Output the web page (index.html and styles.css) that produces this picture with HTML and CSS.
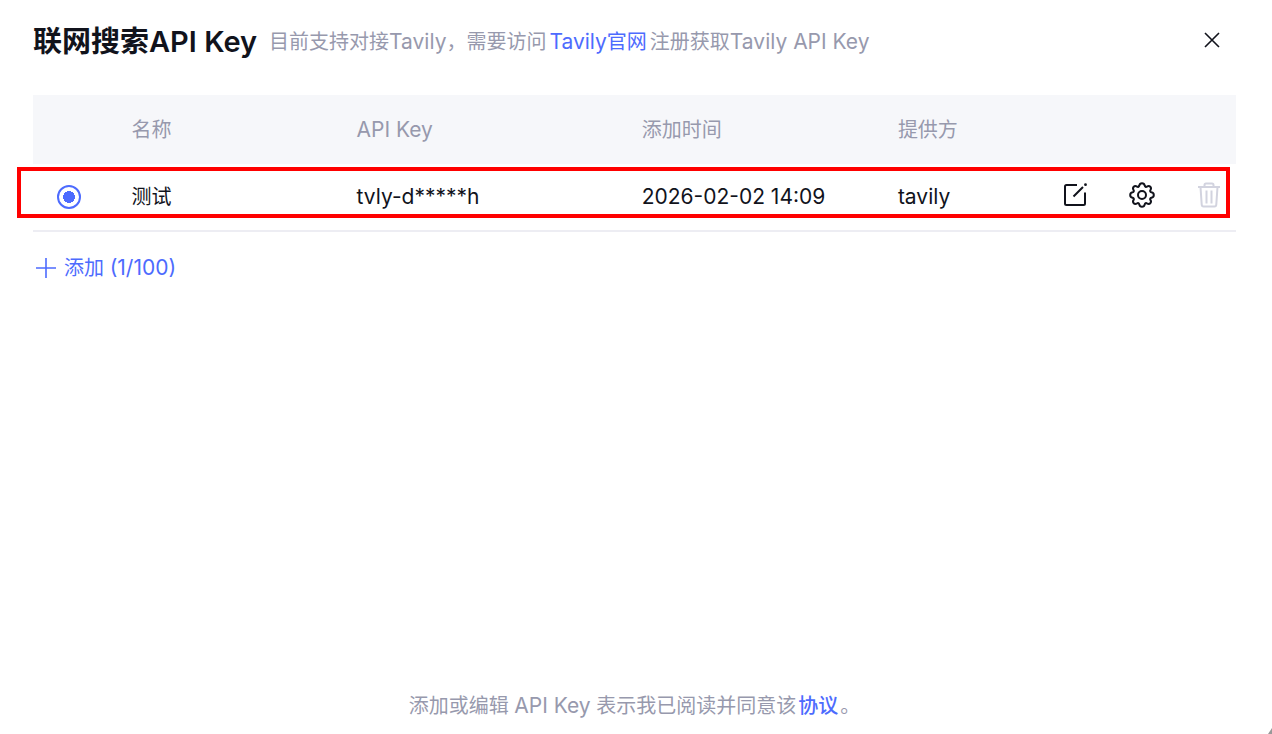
FILE: index.html
```html
<!DOCTYPE html>
<html lang="zh-CN">
<head>
    <meta charset="UTF-8">
    <meta name="viewport" content="width=device-width, initial-scale=1.0">
    <title>联网搜索API Key</title>
    <link rel="stylesheet" href="styles.css">
</head>
<body>
    <div class="dialog">
        <header class="dialog-header">
            <h1>联网搜索API Key</h1>
            <p class="hint">目前支持对接<span class="latin">Tavily</span>，需要访问<a class="hint-link" href="#"><span class="latin">Tavily</span>官网</a>注册获取<span class="latin">Tavily API Key</span></p>
            <button class="icon-button close" type="button" aria-label="关闭">
                <svg width="16" height="16" viewBox="0 0 16 16"><path d="M1 1l14 14M15 1L1 15"/></svg>
            </button>
        </header>
        <main>
            <div class="table-wrap">
                <table>
                    <thead>
                        <tr>
                            <th class="col-radio"></th>
                            <th class="col-name">名称</th>
                            <th class="col-key latin">API Key</th>
                            <th class="col-time">添加时间</th>
                            <th class="col-provider">提供方</th>
                            <th class="col-actions"></th>
                        </tr>
                    </thead>
                    <tbody>
                        <tr>
                            <td><input type="radio" name="key" id="key1" aria-label="测试" checked></td>
                            <td><label for="key1">测试</label></td>
                            <td class="latin">tvly-d*****h</td>
                            <td class="latin">2026-02-02 14:09</td>
                            <td class="latin">tavily</td>
                            <td class="col-actions">
                                <div class="actions">
                                    <button class="icon-button" type="button" aria-label="编辑">
                                        <svg width="28" height="28" viewBox="0 0 28 28"><path d="M16 4H5.500Q4 4 4 5.500V22.500Q4 24 5.500 24H22.500Q24 24 24 22.500V11.500M12.500 15.500L22 6"/><circle class="dot" cx="24.500" cy="3.700" r="1.400"/></svg>
                                    </button>
                                    <button class="icon-button" type="button" aria-label="设置">
                                        <svg width="28" height="28" viewBox="0 0 28 28"><circle cx="14" cy="14" r="4"/><path d="M11.300 4.600C11.900 1.400 16.100 1.400 16.700 4.600C17 5.800 18 6.200 18.900 5.600C21.600 3.900 24.100 6.400 22.400 9.100C21.800 10 22.200 11 23.400 11.300C26.600 11.900 26.600 16.100 23.400 16.700C22.200 17 21.800 18 22.400 18.900C24.100 21.600 21.600 24.100 18.900 22.400C18 21.800 17 22.200 16.700 23.400C16.100 26.600 11.900 26.600 11.300 23.400C11 22.200 10 21.800 9.100 22.400C6.400 24.100 3.900 21.600 5.600 18.900C6.200 18 5.800 17 4.600 16.700C1.400 16.100 1.400 11.900 4.600 11.300C5.800 11 6.200 10 5.600 9.100C3.900 6.400 6.400 3.900 9.100 5.600C10 6.200 11 5.800 11.300 4.600Z"/></svg>
                                    </button>
                                    <button class="icon-button" type="button" aria-label="删除" disabled>
                                        <svg width="28" height="28" viewBox="0 0 28 28"><path d="M3 6H25M9.500 6V4Q9.500 2.500 11 2.500H17Q18.500 2.500 18.500 4V6M5.500 6L6.700 23.500Q6.800 25.500 8.500 25.500H19.500Q21.200 25.500 21.300 23.500L22.500 6M11.500 9.500V22.500M16.500 9.500V22.500"/></svg>
                                    </button>
                                </div>
                            </td>
                        </tr>
                    </tbody>
                </table>
                <div class="highlight"></div>
            </div>
            <button class="add" type="button">
                <svg width="20" height="20" viewBox="0 0 20 20"><path d="M10 0V20M0 10H20"/></svg>
                <span>添加 <span class="latin">(1/100)</span></span>
            </button>
        </main>
        <footer>添加或编辑 <span class="latin">API Key</span> 表示我已阅读并同意该<a href="#">协议</a>。</footer>
        <div class="resize-corner"></div>
    </div>
</body>
</html>
```
FILE: styles.css
```css
* {
    box-sizing: border-box;
}
body {
    font-family: Inter, "Noto Sans CJK SC", sans-serif;
    font-size: 20px;
    line-height: 28px;
    color: #11131c;
    background: #fff;
    margin: 0;
}
.dialog {
    position: relative;
    display: flex;
    flex-direction: column;
    min-height: 100vh;
    padding: 20px 36px 14px 33px;
}
.dialog-header {
    display: flex;
    align-items: center;
    height: 43px;
    margin-bottom: 32px;
}
h1 {
    margin: 0 12px 0 0;
    font-size: 29px;
    font-weight: 600;
}
.hint {
    margin: 0;
    color: #9799ad;
}
/* Latin runs sit one step larger than the Chinese text */
.latin {
    font-size: 21px;
}
a {
    color: #4d6bfe;
    text-decoration: none;
}
.hint-link {
    margin: 0 3px;
}
button {
    font: inherit;
    background: none;
    border: none;
    padding: 0;
    cursor: pointer;
}
svg {
    display: block;
    fill: none;
    stroke: currentColor;
    stroke-width: 2;
}
.dot {
    fill: currentColor;
    stroke: none;
}
.icon-button {
    color: #11131c;
}
.icon-button:disabled {
    color: #d2d3df;
    cursor: default;
}
.close {
    margin: 0 16px 4px auto;
}
.close svg {
    stroke-width: 1.6;
}
main {
    flex: 1;
}
.table-wrap {
    position: relative;
}
table {
    width: 100%;
    table-layout: fixed;
    border-collapse: separate;
    border-spacing: 0;
}
th,
td {
    padding: 0 0 0 24px;
    text-align: left;
    font-weight: 400;
}
th {
    height: 69px;
    color: #9799ad;
    background: #f6f7fa;
}
td {
    height: 68px;
    border-bottom: 2px solid #ededf3;
}
.col-radio {
    width: 6.2%;
}
.col-name {
    width: 18.7%;
}
.col-key {
    width: 23.7%;
}
.col-time {
    width: 21.3%;
}
.col-provider {
    width: 13%;
}
.col-actions {
    padding: 0 13px 4px 0;
}
.actions {
    display: flex;
    justify-content: flex-end;
    gap: 39px;
}
input[type="radio"] {
    display: block;
    appearance: none;
    width: 24px;
    height: 24px;
    margin: 0;
    border: 2px solid #4d6bfe;
    border-radius: 50%;
    background: #fff;
}
input[type="radio"]:checked {
    background: radial-gradient(circle, #4d6bfe 6px, #fff 6px);
}
/* Red frame around the key row */
.highlight {
    position: absolute;
    left: -16px;
    right: 6px;
    bottom: 14px;
    height: 51px;
    border: 4px solid #f00;
    pointer-events: none;
}
.add {
    display: flex;
    align-items: center;
    gap: 8px;
    margin: 22px 0 0 3px;
    color: #4d6bfe;
}
.add svg {
    stroke-width: 1.6;
}
footer {
    text-align: center;
    color: #9799ad;
}
footer a {
    margin: 0 2px;
    font-weight: 500;
}
.resize-corner {
    position: absolute;
    right: 0;
    bottom: 0;
    width: 4px;
    height: 6px;
    background: #999;
    clip-path: polygon(100% 0, 100% 100%, 0 100%);
}
```
